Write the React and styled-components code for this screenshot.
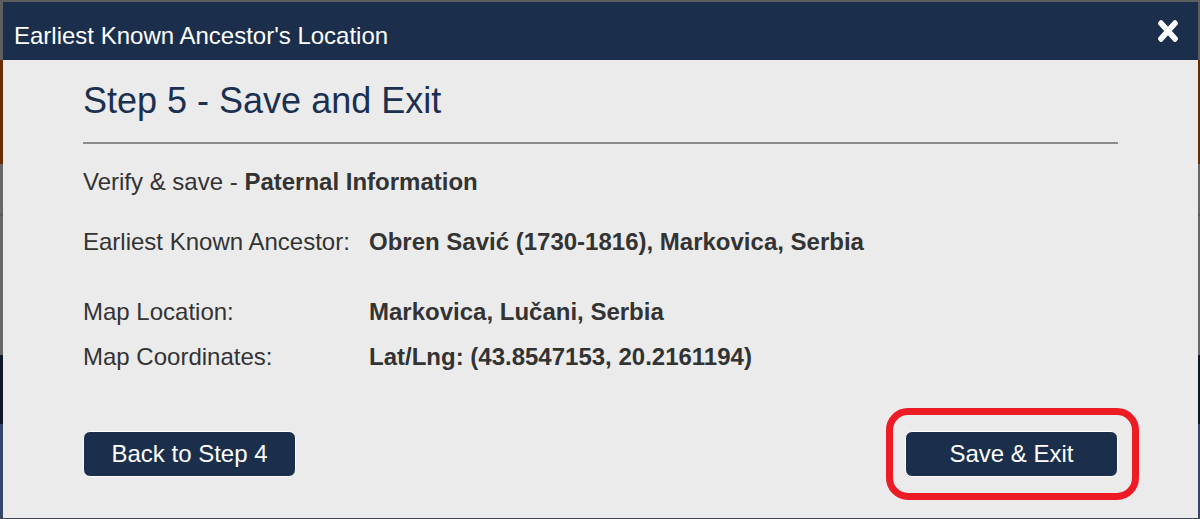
import React from "react";
import styled, { createGlobalStyle } from "styled-components";

const Global = createGlobalStyle`
  html, body { margin: 0; padding: 0; }
  body { font-family: "Liberation Sans", Arial, sans-serif; }
`;

const Page = styled.div`
  box-sizing: border-box;
  width: 1200px;
  height: 519px;
  padding: 2px 2px 1px 3px;
  background: linear-gradient(
    to bottom,
    #5e5e5e 0px, #5e5e5e 60px,
    #6a2d02 60px, #6a2d02 164px,
    #676767 164px, #676767 214px,
    #5a5a5a 214px, #5a5a5a 216px,
    #676767 216px, #676767 355px,
    #0e1828 355px, #0e1828 424px,
    #34476b 424px, #34476b 517px,
    #3d4554 517px
  );
`;

const Modal = styled.div`
  height: 100%;
  display: flex;
  flex-direction: column;
  background: #ebebeb;
`;

const Header = styled.div`
  box-sizing: border-box;
  height: 58px;
  flex: none;
  display: flex;
  justify-content: space-between;
  align-items: flex-start;
  padding: 18px 20px 0 11px;
  background: #1b2f4d;
  color: #ffffff;
`;

const Title = styled.div`
  margin-top: 2px;
  font-size: 24px;
  line-height: 27px;
`;

const Close = styled.button`
  border: 0;
  padding: 0;
  background: none;
  color: #ffffff;
  display: flex;
  cursor: pointer;
`;

const Body = styled.div`
  flex: 1;
  display: flex;
  flex-direction: column;
  padding: 20px 80px 0;
  color: #333333;
`;

const Heading = styled.h2`
  margin: 0;
  font-size: 36px;
  line-height: 41px;
  font-weight: 400;
  color: #1b3050;
`;

const Rule = styled.div`
  margin-top: 21px;
  height: 2px;
  background: #8c8c8c;
`;

const Intro = styled.p`
  margin: 24px 0 0;
  font-size: 24px;
  line-height: 28px;
`;

const Details = styled.div`
  margin-top: 32px;
  display: grid;
  grid-template-columns: 286px 1fr;
  font-size: 24px;
  line-height: 28px;
`;

const Label = styled.div`
  margin-top: ${(p) => p.$gap || 0}px;
`;

const Value = styled.div`
  margin-top: ${(p) => p.$gap || 0}px;
  font-weight: 700;
`;

const Actions = styled.div`
  margin-top: 60px;
  display: flex;
  justify-content: space-between;
  align-items: flex-start;
`;

const Button = styled.button`
  box-sizing: border-box;
  width: 213px;
  height: 46px;
  border: 1px solid #ffffff;
  border-radius: 7px;
  background: #1b2f4d;
  color: #ffffff;
  font-family: "Liberation Sans", Arial, sans-serif;
  font-size: 24px;
  cursor: pointer;
`;

const Marked = styled.div`
  position: relative;
`;

const Highlight = styled.div`
  position: absolute;
  left: -19px;
  right: -21px;
  top: -23px;
  bottom: -23px;
  border: 7px solid #ed1c24;
  border-radius: 22px;
  pointer-events: none;
`;

const CloseIcon = () => (
  <svg width="20" height="22" viewBox="0 80 352 352" preserveAspectRatio="none" fill="currentColor">
    <path d="M242.72 256l100.07-100.07c12.28-12.28 12.28-32.19 0-44.48l-22.24-22.24c-12.28-12.28-32.19-12.28-44.48 0L176 189.28 75.930 89.21c-12.28-12.28-32.19-12.28-44.48 0L9.21 111.45c-12.28 12.28-12.28 32.19 0 44.48L109.28 256 9.21 356.070c-12.28 12.28-12.28 32.19 0 44.48l22.24 22.24c12.28 12.28 32.2 12.28 44.48 0L176 322.72l100.07 100.07c12.28 12.28 32.2 12.28 44.48 0l22.24-22.24c12.28-12.28 12.28-32.19 0-44.48L242.72 256z" />
  </svg>
);

export default function App() {
  return (
    <>
      <Global />
      <Page>
        <Modal>
          <Header>
            <Title>Earliest Known Ancestor's Location</Title>
            <Close aria-label="Close">
              <CloseIcon />
            </Close>
          </Header>
          <Body>
            <Heading>Step 5 - Save and Exit</Heading>
            <Rule />
            <Intro>
              Verify &amp; save - <strong>Paternal Information</strong>
            </Intro>
            <Details>
              <Label>Earliest Known Ancestor:</Label>
              <Value>Obren Savić (1730-1816), Markovica, Serbia</Value>
              <Label $gap={42}>Map Location:</Label>
              <Value $gap={42}>Markovica, Lučani, Serbia</Value>
              <Label $gap={17}>Map Coordinates:</Label>
              <Value $gap={17}>Lat/Lng: (43.8547153, 20.2161194)</Value>
            </Details>
            <Actions>
              <Button>Back to Step 4</Button>
              <Marked>
                <Button>Save &amp; Exit</Button>
                <Highlight />
              </Marked>
            </Actions>
          </Body>
        </Modal>
      </Page>
    </>
  );
}
